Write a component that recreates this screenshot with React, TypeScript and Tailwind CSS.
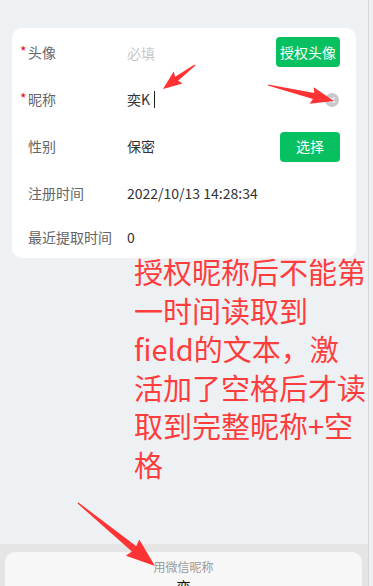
import React from 'react';

// 个人资料页 + 标注（红色箭头与说明文字）

const font = { fontFamily: '"Noto Sans CJK SC", "Noto Sans", sans-serif' };

type Pt = [number, number];

// 画一个截图工具风格的箭头：尾部细，头部三角
const arrowPoints = (tail: Pt, tip: Pt, headLen: number, headW: number, neckW: number) => {
  const [x1, y1] = tail;
  const [x2, y2] = tip;
  const dx = x2 - x1;
  const dy = y2 - y1;
  const len = Math.hypot(dx, dy);
  const ux = dx / len;
  const uy = dy / len;
  const nx = -uy;
  const ny = ux;
  const bx = x2 - ux * headLen;
  const by = y2 - uy * headLen;
  const p = (x: number, y: number) => `${x.toFixed(1)},${y.toFixed(1)}`;
  return [
    p(x1 + nx * 0.6, y1 + ny * 0.6),
    p(bx + nx * neckW / 2, by + ny * neckW / 2),
    p(bx - ux * 2 + nx * headW / 2, by - uy * 2 + ny * headW / 2),
    p(x2, y2),
    p(bx - ux * 2 - nx * headW / 2, by - uy * 2 - ny * headW / 2),
    p(bx - nx * neckW / 2, by - ny * neckW / 2),
    p(x1 - nx * 0.6, y1 - ny * 0.6),
  ].join(' ');
};

const Row = ({
  label, required, h, children,
}: { label: string; required?: boolean; h: string; children: React.ReactNode }) => (
  <div className={`flex items-center pl-4 pr-4 ${h}`}>
    <div className="relative w-[99px] shrink-0 text-[14px] text-[#646566]">
      {required && <span className="absolute -left-[8px] -top-[1px] text-[14px] text-[#ee0a24]">*</span>}
      {label}
    </div>
    <div className="flex flex-1 items-center justify-between">{children}</div>
  </div>
);

export default function App() {
  return (
    <div className="relative h-[586px] w-[373px] overflow-hidden bg-[#eef1f4]" style={font}>
      <div className="flex h-full w-[369px] flex-col border-r border-[#d6d8db]">
        {/* 表单卡片 */}
        <div className="mx-3 mt-[28px] rounded-[10px] bg-white">
          <Row label="头像" required h="h-[48px]">
            <span className="pt-[3px] text-[14px] text-[#c8c9cc]">必填</span>
            <button className="h-[30px] w-[64px] rounded-[4px] bg-[#07c160] text-[14px] text-white">授权头像</button>
          </Row>
          <Row label="昵称" required h="h-[47px]">
            <span className="flex items-center text-[14px] text-[#323233]">
              奕K
              <span className="ml-[4px] inline-block h-[17px] w-[1px] bg-[#222]" />
            </span>
            <span className="mr-[1px] flex h-[14px] w-[14px] items-center justify-center rounded-full bg-[#c8c9cc]">
              <svg width="8" height="8" viewBox="0 0 8 8">
                <path d="M1.5 1.5 L6.5 6.5 M6.5 1.5 L1.5 6.5" stroke="#fff" strokeWidth="1.2" />
              </svg>
            </span>
          </Row>
          <Row label="性别" h="h-[47px]">
            <span className="text-[14px] text-[#323233]">保密</span>
            <button className="h-[30px] w-[60px] rounded-[4px] bg-[#07c160] text-[14px] text-white">选择</button>
          </Row>
          <Row label="注册时间" h="h-[47px]">
            <span className="text-[14px] text-[#323233]">2022/10/13 14:28:34</span>
          </Row>
          <Row label="最近提取时间" h="h-[41px]">
            <span className="text-[14px] text-[#323233]">0</span>
          </Row>
        </div>

        <div className="flex-1" />

        {/* 底部：微信昵称选择面板 */}
        <div className="h-[42px] bg-[#e5e5e5] pt-[8px]">
          <div className="mx-[5px] mr-[6px] h-full rounded-t-[10px] bg-[#f7f7f7] pt-[5px] text-center">
            <div className="text-[12px] leading-[20px] text-[#9a9a9a]">用微信昵称</div>
            <div className="text-[14px] leading-[18px] text-[#111]">奕</div>
          </div>
        </div>
      </div>

      {/* 标注文字 */}
      <div className="absolute left-[134px] top-[252px] text-[29px] leading-[38.5px] text-[#ff3d3d]">
        授权昵称后不能第<br />
        一时间读取到<br />
        field的文本，激<br />
        活加了空格后才读<br />
        取到完整昵称+空<br />
        格
      </div>

      {/* 标注箭头 */}
      <svg className="pointer-events-none absolute left-0 top-0" width="373" height="586">
        <polygon points={arrowPoints([195, 65], [163, 89], 17, 15, 5)} fill="#ff3333" />
        <polygon points={arrowPoints([268, 85], [334, 101], 21, 17, 6)} fill="#ff3333" />
        <polygon points={arrowPoints([78, 503], [155, 566], 27, 21, 7)} fill="#ff3333" />
      </svg>
    </div>
  );
}
